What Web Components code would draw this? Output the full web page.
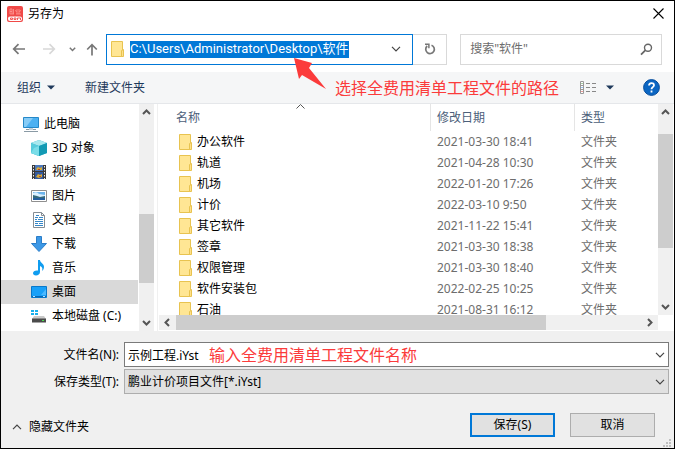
<!DOCTYPE html>
<html lang="zh-CN">
<head>
<meta charset="utf-8">
<meta name="viewport" content="width=device-width, initial-scale=1">
<title>另存为</title>
<style>
    body {
        margin: 0;
        font: 12px/20px "Noto Sans", "Noto Sans CJK SC", sans-serif;
        color: #000;
    }
</style>
</head>
<body>
<save-dialog></save-dialog>

<script>
const BASE = `
    *, *::before, *::after { box-sizing: border-box; }
    svg { display: block; flex: none; }
    button { font: inherit; color: inherit; border: 0; padding: 0; background: none; }
    input, select { font: inherit; color: inherit; border: 0; padding: 0; margin: 0; background: none; outline: 0; }
`;

const FOLDER = `
    <svg width="14" height="18" viewBox="0 0 14 18" aria-hidden="true">
        <path d="M.5 1.500h11v15H.5z" fill="#ffe694" stroke="#e8c350"/>
        <path d="M10.500 10.500l2-1v7h-2z" fill="#ffe08a" stroke="#e8c350"/>
    </svg>`;

const chevron = (color = '#444') => `
    <svg width="10" height="6" viewBox="0 0 10 6" aria-hidden="true">
        <path d="M1 .8l4 4 4-4" fill="none" stroke="${color}" stroke-width="1.2"/>
    </svg>`;

class TitleBar extends HTMLElement {
    constructor() {
        super();
        this.attachShadow({ mode: 'open' });
        this.shadowRoot.innerHTML = `
            <style>
                ${BASE}
                :host {
                    display: flex;
                    align-items: center;
                    gap: 5px;
                    height: 25px;
                    padding: 0 10px 0 6px;
                }
                h1 { flex: 1; margin: 0; font: inherit; }
            </style>
            <svg width="16" height="16" viewBox="0 0 16 16" aria-hidden="true">
                <rect width="16" height="16" rx="2" fill="#f04a48"/>
                <path d="M3 3v5M5 3v5M3 3h2M3 5.500h2M6.500 3v5M3 8h4M10 3v5M12 3v5M9 8h5M8.500 4l1 2M13.500 4l-1 2" stroke="#ff9a96" stroke-width=".8" fill="none"/>
                <rect x="1" y="10.500" width="14" height="4.500" rx="2" fill="#fff"/>
                <path d="M3.500 12h2v1.500h-2zM7 12h2v1.500H7zM10.500 14v-2h3v2" stroke="#f04a48" stroke-width=".9" fill="none"/>
            </svg>
            <h1><slot></slot></h1>
            <button aria-label="关闭">
                <svg width="11" height="11" viewBox="0 0 11 11"><path d="M.5.5l10 10M10.500.5l-10 10" stroke="#000" stroke-width="1.1"/></svg>
            </button>
        `;
    }
}

class NavBar extends HTMLElement {
    constructor() {
        super();
        this.attachShadow({ mode: 'open' });
        this.shadowRoot.innerHTML = `
            <style>
                ${BASE}
                :host {
                    display: flex;
                    align-items: center;
                    height: 46px;
                    padding: 0 12px 0 10px;
                }
                .history { display: flex; align-items: center; width: 95px; }
                .history button { display: flex; justify-content: center; }
                .back, .forward { width: 16px; }
                .forward { margin-left: 14px; }
                .recent { width: 10px; margin-left: 10px; }
                .up { width: 14px; margin-left: 8px; }
                .address {
                    flex: 3;
                    display: flex;
                    align-items: center;
                    height: 31px;
                    padding: 0 11px 0 4px;
                    border: 1px solid #0078d7;
                }
                .address input {
                    field-sizing: content;
                    height: 17px;
                    margin-left: 5px;
                    font-family: Roboto, "Noto Sans CJK SC", sans-serif;
                    font-size: 13px;
                    color: #fff;
                    background: #0078d7;
                }
                .address button { margin-left: auto; }
                .refresh {
                    display: grid;
                    place-items: center;
                    width: 34px;
                    height: 31px;
                    border: 1px solid #d9d9d9;
                    border-left: 0;
                }
                .search {
                    flex: none;
                    display: flex;
                    align-items: center;
                    width: 31%;
                    height: 31px;
                    margin-left: 13px;
                    padding: 0 8px 0 9px;
                    border: 1px solid #d9d9d9;
                }
                .search input { flex: 1; min-width: 0; }
                .search input::placeholder { color: #6d6d6d; opacity: 1; }
            </style>
            <div class="history">
                <button class="back" aria-label="后退">
                    <svg width="14" height="12" viewBox="0 0 14 12"><path d="M13 6H2M6.500 1.200L1.700 6l4.800 4.800" fill="none" stroke="#777" stroke-width="1.700"/></svg>
                </button>
                <button class="forward" aria-label="前进">
                    <svg width="14" height="12" viewBox="0 0 14 12"><path d="M1 6h11M7.500 1.200L12.300 6l-4.800 4.800" fill="none" stroke="#d8d8d8" stroke-width="1.700"/></svg>
                </button>
                <button class="recent" aria-label="最近位置">
                    <svg width="7" height="5" viewBox="0 0 7 5"><path d="M.8.8l2.700 2.700L6.200.8" fill="none" stroke="#777" stroke-width="1.500"/></svg>
                </button>
                <button class="up" aria-label="上移">
                    <svg width="12" height="13" viewBox="0 0 12 13"><path d="M6 12.500V2M1.200 6.500L6 1.700l4.800 4.800" fill="none" stroke="#777" stroke-width="1.700"/></svg>
                </button>
            </div>
            <div class="address">
                ${FOLDER}
                <input aria-label="地址" value="C:\\Users\\Administrator\\Desktop\\软件">
                <button aria-label="以前的位置">${chevron()}</button>
            </div>
            <button class="refresh" aria-label="刷新">
                <svg width="12" height="12" viewBox="0 0 12 12"><path d="M7.500 2.200A4.300 4.300 0 1 1 3.200 3" fill="none" stroke="#777" stroke-width="1.700"/><path d="M1 1.300h3.900v4" fill="none" stroke="#777" stroke-width="1.500"/></svg>
            </button>
            <div class="search">
                <input type="text" aria-label="搜索" placeholder='搜索"软件"'>
                <svg width="13" height="13" viewBox="0 0 13 13" aria-hidden="true"><circle cx="8" cy="4.700" r="3.500" fill="none" stroke="#666" stroke-width="1.400"/><path d="M5.500 7.200L1 11.700" stroke="#666" stroke-width="1.800"/></svg>
            </div>
        `;
    }
}

class ToolBar extends HTMLElement {
    constructor() {
        super();
        this.attachShadow({ mode: 'open' });
        this.shadowRoot.innerHTML = `
            <style>
                ${BASE}
                :host {
                    display: flex;
                    align-items: center;
                    height: 32px;
                    padding: 0 14px 0 16px;
                    background: #f5f6f7;
                    border-bottom: 1px solid #e5e7ea;
                    color: #1e395b;
                }
                button { display: flex; align-items: center; gap: 6px; }
                .create { margin-left: 30px; }
                .note { flex: 1; padding-left: 190px; white-space: nowrap; }
                .view { gap: 10px; margin-right: 29px; }
            </style>
            <button>组织
                <svg width="8" height="5" viewBox="0 0 8 5" aria-hidden="true"><path d="M0 .5h8L4 4.500z" fill="#1e395b"/></svg>
            </button>
            <button class="create">新建文件夹</button>
            <div class="note"><slot></slot></div>
            <button class="view" aria-label="更改视图">
                <svg width="16" height="13" viewBox="0 0 16 13">
                    <path d="M.5.500h3v12h-3zM.5 4.500h3M.5 8.500h3" fill="#fff" stroke="#999"/>
                    <path d="M1.500 2.500h1" stroke="#4a9a4a"/><path d="M1.500 6.500h1" stroke="#2a7de1"/><path d="M1.500 10.500h1" stroke="#d33"/>
                    <path d="M6 2.500h4M12 2.500h4M6 6.500h4M12 6.500h4M6 10.500h4M12 10.500h4" stroke="#888"/>
                </svg>
                <svg width="8" height="5" viewBox="0 0 8 5"><path d="M0 .5h8L4 4.500z" fill="#1e395b"/></svg>
            </button>
            <button aria-label="帮助">
                <svg width="17" height="17" viewBox="0 0 17 17"><circle cx="8.500" cy="8.500" r="7.900" fill="#0b66c3" stroke="#0a4f9c"/><path d="M6 6.500c0-3.200 5-3.200 5-.3 0 1.900-2.500 1.900-2.500 4M8.500 11.500v1.900" fill="none" stroke="#fff" stroke-width="1.800"/></svg>
            </button>
        `;
    }
}

// Red note text laid next to the control it explains
class NoteText extends HTMLElement {
    constructor() {
        super();
        this.attachShadow({ mode: 'open' });
        this.shadowRoot.innerHTML = `
            <style>
                :host {
                    display: block;
                    font-size: 16px;
                    line-height: 24px;
                    color: #fb3b3b;
                    white-space: nowrap;
                    pointer-events: none;
                }
            </style>
            <slot></slot>
        `;
    }
}

class ScrollBar extends HTMLElement {
    constructor() {
        super();
        this.attachShadow({ mode: 'open' });
    }

    connectedCallback() {
        const [before, thumb, after] = this.getAttribute('parts').split(' ');
        const horizontal = this.hasAttribute('horizontal');
        const arrow = d => `<svg width="9" height="9" viewBox="0 0 9 9" aria-hidden="true"><path d="${d}" fill="none" stroke="#555" stroke-width="2"/></svg>`;
        this.shadowRoot.innerHTML = `
            <style>
                ${BASE}
                :host {
                    display: flex;
                    flex-direction: ${horizontal ? 'row' : 'column'};
                    background: #f0f0f0;
                }
                .end { flex: none; display: grid; place-items: center; ${horizontal ? 'width' : 'height'}: 17px; }
                .before { flex: ${before} 0 0; }
                .thumb { flex: ${thumb} 0 0; background: #cdcdcd; }
                .after { flex: ${after} 0 0; }
            </style>
            <div class="end">${arrow(horizontal ? 'M6 1L2.500 4.500 6 8' : 'M1 6l3.500-3.500L8 6')}</div>
            <div class="before"></div>
            <div class="thumb"></div>
            <div class="after"></div>
            <div class="end">${arrow(horizontal ? 'M3 1l3.500 3.500L3 8' : 'M1 3l3.500 3.500L8 3')}</div>
        `;
    }
}

class TreeItem extends HTMLElement {
    constructor() {
        super();
        this.attachShadow({ mode: 'open' });
        this.shadowRoot.innerHTML = `
            <style>
                ${BASE}
                :host { display: block; }
                :host([selected]) { background: #d9d9d9; }
                a {
                    display: flex;
                    align-items: center;
                    gap: 5px;
                    height: 24px;
                    padding-left: 30px;
                    color: inherit;
                    text-decoration: none;
                    white-space: nowrap;
                }
                :host([root]) a { padding-left: 22px; }
            </style>
            <a href="#"><slot name="icon"></slot><span><slot></slot></span></a>
        `;
    }
}

class FolderTree extends HTMLElement {
    constructor() {
        super();
        this.attachShadow({ mode: 'open' });
        this.shadowRoot.innerHTML = `
            <style>
                ${BASE}
                :host {
                    display: flex;
                    width: 153px;
                    background: #fff;
                }
                nav { flex: 1; min-width: 0; padding: 8px 1px 0 0; overflow: hidden; }
                scroll-bar { flex: none; width: 15px; }
            </style>
            <nav aria-label="文件夹">
                <tree-item root>
                    <svg slot="icon" width="16" height="16" viewBox="0 0 16 16"><path d="M.5 1.500h15v10H.5z" fill="#4db1f2" stroke="#2588c8"/><path d="M1 2h9l-7 9H1z" fill="#86ccf7"/><path d="M3 13.500h10M1 15.500h14" stroke="#8a9aa5"/><path d="M6 12h4v2H6z" fill="#c4d0d8"/></svg>
                    此电脑
                </tree-item>
                <tree-item>
                    <svg slot="icon" width="16" height="16" viewBox="0 0 16 16"><path d="M0 3l8-3 8 3v10l-8 3-8-3z" fill="#30b4cc"/><path d="M0 3l8-3 8 3-8 3z" fill="#a8e8ee"/><path d="M0 3l8 3v10l-8-3z" fill="#58ccdc"/><path d="M8 6l8-3v10l-8 3z" fill="#139ab4"/><path d="M3 8l5-2v10l-8-3z" fill="#7adde8"/></svg>
                    3D 对象
                </tree-item>
                <tree-item>
                    <svg slot="icon" width="16" height="16" viewBox="0 0 16 16"><path d="M1 1h14v14H1z" fill="#3a3a3a"/><path d="M4 1h8v6H4z" fill="#4d78ba"/><path d="M4 8h8v7H4z" fill="#335aa0"/><path d="M2.500 2v13M13.500 2v13" stroke="#eee" stroke-dasharray="1.500 1.500"/><path d="M5 5l2-2 2 1 2-1v3H6zM5 13l2-3 2 1 2-1v3l-3 1z" fill="#d9ab35"/><path d="M7 5h2v1H7zM8 12h2v1H8z" fill="#b5442e"/></svg>
                    视频
                </tree-item>
                <tree-item>
                    <svg slot="icon" width="16" height="16" viewBox="0 0 16 16"><path d="M.5 2.500h15v11H.5z" fill="#fff" stroke="#8f8f8f"/><path d="M2 4h12v8H2z" fill="#6db5ec"/><path d="M2 5q4-2 6 1l6 1v2H2z" fill="#d9efff"/><path d="M2 7l4 1 3 1 5-1v4H2z" fill="#356a7c"/><path d="M2 10h12v2H2z" fill="#245e9e"/></svg>
                    图片
                </tree-item>
                <tree-item>
                    <svg slot="icon" width="16" height="16" viewBox="0 0 16 16"><path d="M2.500.500h8l3 3v12h-11z" fill="#fff" stroke="#858d94"/><path d="M10.500.500v3h3" fill="none" stroke="#858d94"/><path d="M4 5.500h3M8 5.500h4M4 7.500h2M7 7.500h5M4 9.500h8M4 11.500h3M8 11.500h4M4 13.500h8" stroke="#3587c8"/><path d="M5 3.500h3" stroke="#3587c8"/></svg>
                    文档
                </tree-item>
                <tree-item>
                    <svg slot="icon" width="16" height="16" viewBox="0 0 16 16"><path d="M5.500.500h5v7h5L8 15.500.500 7.500h5z" fill="#3c98e6" stroke="#2b7dc8"/></svg>
                    下载
                </tree-item>
                <tree-item>
                    <svg slot="icon" width="16" height="16" viewBox="0 0 16 16"><path d="M7 0h2c0 3 4 3.500 4 7 0 2-1 3-2 4 1-3 0-4-2-5v6c0 2-2 3.500-4 3.500S2 14.500 2 13s2-3 5-2.500z" fill="#109df0"/></svg>
                    音乐
                </tree-item>
                <tree-item selected>
                    <svg slot="icon" width="16" height="16" viewBox="0 0 16 16"><path d="M.5 2.500h15v11H.5z" fill="#18a0f8" stroke="#0878ca"/><path d="M10 11l5-6v6z" fill="#4cb9ff"/><path d="M1 12.500h14" stroke="#0867b5"/><path d="M2 12.500h2M12 12.500h2" stroke="#b7e1ff"/></svg>
                    桌面
                </tree-item>
                <tree-item>
                    <svg slot="icon" width="16" height="16" viewBox="0 0 16 16"><path d="M0 2h3v2H0zM4 2h3v2H4zM0 5h3v2H0zM4 5h3v2H4z" fill="#18b0ed"/><path d="M3 8h10l2 3H1z" fill="#c9c9c9"/><path d="M1 10.500h14v4H1z" fill="#4b4b4b"/><path d="M11 12.500h2" stroke="#48e04d"/></svg>
                    本地磁盘 (C:)
                </tree-item>
            </nav>
            <scroll-bar parts="94 70 31"></scroll-bar>
        `;
    }
}

class FileList extends HTMLElement {
    constructor() {
        super();
        this.attachShadow({ mode: 'open' });
    }

    set data(files) {
        this.files = files;
        this.render();
    }

    get data() {
        return this.files;
    }

    render() {
        this.shadowRoot.innerHTML = `
            <style>
                ${BASE}
                :host {
                    display: grid;
                    grid-template: minmax(0, 1fr) 16px / minmax(0, 1fr) 15px;
                    padding-right: 1px;
                    background: #fff;
                    border-left: 1px solid #f0f0f0;
                }
                .rows { overflow: hidden; position: relative; }
                .sort { position: absolute; left: 138px; top: 0; }
                table { width: 100%; border-collapse: separate; border-spacing: 0; table-layout: fixed; }
                th, td { padding: 0 0 0 6px; text-align: left; font-weight: normal; white-space: nowrap; }
                th { height: 27px; color: #4c607a; }
                th + th { border-left: 1px solid #e5e5e5; }
                td { height: 21px; line-height: 20px; color: #6d6d6d; }
                td + td { padding-left: 7px; }
                th:first-child { padding-left: 18px; }
                td:first-child { padding-left: 21px; color: #000; }
                .name { display: flex; align-items: center; gap: 4px; }
                .date { width: 144px; }
                .type { width: 84px; }
                scroll-bar[horizontal] { margin-left: 1px; margin-bottom: 1px; }
            </style>
            <div class="rows">
                <svg class="sort" width="9" height="5" viewBox="0 0 9 5" aria-hidden="true"><path d="M.5 4.500l4-4 4 4" fill="none" stroke="#555"/></svg>
                <table>
                    <thead>
                        <tr><th>名称</th><th class="date">修改日期</th><th class="type">类型</th></tr>
                    </thead>
                    <tbody>
                        ${this.files.map(([name, date]) => `
                            <tr>
                                <td><div class="name">${FOLDER}<span>${name}</span></div></td>
                                <td>${date}</td>
                                <td>文件夹</td>
                            </tr>`).join('')}
                    </tbody>
                </table>
            </div>
            <scroll-bar parts="13 113 50"></scroll-bar>
            <scroll-bar horizontal parts="0 369 95"></scroll-bar>
        `;
    }
}

class SaveForm extends HTMLElement {
    constructor() {
        super();
        this.attachShadow({ mode: 'open' });
        this.shadowRoot.innerHTML = `
            <style>
                ${BASE}
                :host { display: block; position: relative; background: #f0f0f0; }
                .fields {
                    display: grid;
                    grid-template-columns: 118px minmax(0, 1fr);
                    gap: 2px 5px;
                    align-items: center;
                    padding: 11px 5px 0 0;
                }
                label { text-align: right; }
                .box {
                    position: relative;
                    display: flex;
                    align-items: center;
                    height: 25px;
                    border: 1px solid #7a7a7a;
                    background: #fff;
                }
                .box.type { border-color: #adadad; background: #e1e1e1; }
                .box > input, .box > select { flex: 1; min-width: 0; height: 23px; padding: 0 24px 0 3px; appearance: none; }
                .box > svg { position: absolute; right: 3px; pointer-events: none; }
                ::slotted(note-text) { position: absolute; left: 84px; }
                .actions {
                    display: flex;
                    align-items: center;
                    gap: 15px;
                    padding: 19px 19px 11px 11px;
                }
                .hide { display: flex; align-items: center; gap: 7px; margin: 4px auto 0 0; }
                .hide svg { transform: rotate(180deg); }
                .push { width: 85px; height: 24px; border: 1px solid #adadad; background: #e1e1e1; }
                .push.primary { border: 2px solid #0078d7; }
                .grip { position: absolute; right: 2px; bottom: 0; }
            </style>
            <div class="fields">
                <label for="name">文件名(N):</label>
                <div class="box">
                    <input id="name" type="text" value="示例工程.iYst">
                    ${chevron()}
                    <slot></slot>
                </div>
                <label for="type">保存类型(T):</label>
                <div class="box type">
                    <select id="type"><option>鹏业计价项目文件[*.iYst]</option></select>
                    ${chevron()}
                </div>
            </div>
            <div class="actions">
                <button class="hide">${chevron()}隐藏文件夹</button>
                <button class="push primary">保存(S)</button>
                <button class="push">取消</button>
            </div>
            <svg class="grip" width="9" height="9" viewBox="0 0 9 9" aria-hidden="true"><path d="M6 0h2v2H6zM3 3h2v2H3zM6 3h2v2H6zM0 6h2v2H0zM3 6h2v2H3zM6 6h2v2H6z" fill="#bfbfbf"/></svg>
        `;
    }
}

class SaveDialog extends HTMLElement {
    constructor() {
        super();
        this.attachShadow({ mode: 'open' });
        this.shadowRoot.innerHTML = `
            <style>
                ${BASE}
                :host {
                    box-sizing: border-box;
                    position: relative;
                    display: flex;
                    flex-direction: column;
                    height: 100vh;
                    border: 1px solid #000;
                    background: #fff;
                    overflow: hidden;
                }
                title-bar, nav-bar, tool-bar, save-form { flex: none; }
                .panes { flex: 1; min-height: 0; display: flex; gap: 3px; }
                folder-tree { flex: none; }
                file-list { flex: 1; min-width: 0; }
                .pointer { position: absolute; left: 293px; top: 56px; }
            </style>
            <title-bar>另存为</title-bar>
            <nav-bar></nav-bar>
            <tool-bar><note-text>选择全费用清单工程文件的路径</note-text></tool-bar>
            <div class="panes">
                <folder-tree></folder-tree>
                <file-list></file-list>
            </div>
            <save-form><note-text>输入全费用清单工程文件名称</note-text></save-form>
            <svg class="pointer" width="34" height="33" viewBox="0 0 34 33" aria-hidden="true"><path d="M0 1l18 5-3 5 17 21-24-14-3 4z" fill="#fb3b3b"/></svg>
        `;
        this.shadowRoot.querySelector('file-list').data = [
            ['办公软件', '2021-03-30 18:41'],
            ['轨道', '2021-04-28 10:30'],
            ['机场', '2022-01-20 17:26'],
            ['计价', '2022-03-10 9:50'],
            ['其它软件', '2021-11-22 15:41'],
            ['签章', '2021-03-30 18:38'],
            ['权限管理', '2021-03-30 18:40'],
            ['软件安装包', '2022-02-25 10:25'],
            ['石油', '2021-08-31 16:12'],
        ];
    }
}

customElements.define('title-bar', TitleBar);
customElements.define('nav-bar', NavBar);
customElements.define('note-text', NoteText);
customElements.define('tool-bar', ToolBar);
customElements.define('scroll-bar', ScrollBar);
customElements.define('tree-item', TreeItem);
customElements.define('folder-tree', FolderTree);
customElements.define('file-list', FileList);
customElements.define('save-form', SaveForm);
customElements.define('save-dialog', SaveDialog);
</script>
</body>
</html>
